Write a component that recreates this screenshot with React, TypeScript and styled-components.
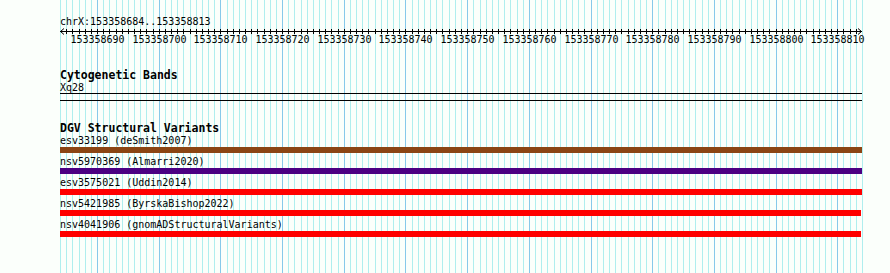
import styled, { createGlobalStyle } from 'styled-components';

const START = 153358684;
const END = 153358813;
const LEFT = 60;
const WIDTH = 802;
const PX = WIDTH / (END - START + 1);

const baseX = (base: number) => Math.round((base - START) * PX);

const variants = [
  { name: 'esv33199 (deSmith2007)', color: '#8b4513', width: 802 },
  { name: 'nsv5970369 (Almarri2020)', color: '#4b0082', width: 802 },
  { name: 'esv3575021 (Uddin2014)', color: '#ff0000', width: 802 },
  { name: 'nsv5421985 (ByrskaBishop2022)', color: '#ff0000', width: 801 },
  { name: 'nsv4041906 (gnomADStructuralVariants)', color: '#ff0000', width: 801 },
];

const GlobalStyle = createGlobalStyle`
  html, body {
    margin: 0;
    padding: 0;
    background: #fbfffb;
  }
`;

const App = () => {
  const bases: number[] = [];
  for (let b = START; b <= END + 1; b++) bases.push(b);
  const majors = bases.filter((b) => b % 10 === 0 && b <= END);

  return (
    <>
      <GlobalStyle />
      <Page>
        <Grid width={LEFT + WIDTH + 2} height={273}>
          {bases.map((b) => (
            <line
              key={b}
              x1={LEFT + baseX(b) + 0.5}
              x2={LEFT + baseX(b) + 0.5}
              y1={0}
              y2={273}
              stroke={b % 10 === 0 ? '#87c9ea' : '#afeeee'}
              strokeWidth={1}
              shapeRendering="crispEdges"
            />
          ))}
        </Grid>
        <Content>
          <Location>chrX:153358684..153358813</Location>
          <Ruler width={WIDTH + 2} height={20}>
            <line x1={0} x2={WIDTH} y1={3.5} y2={3.5} stroke="#000" shapeRendering="crispEdges" />
            <polyline points="4,0.5 0.5,3.5 4,6.5" fill="none" stroke="#000" />
            <polyline points={`${WIDTH - 4},0.5 ${WIDTH - 0.5},3.5 ${WIDTH - 4},6.5`} fill="none" stroke="#000" />
            {bases.slice(1, -1).map((b) => (
              <line
                key={b}
                x1={baseX(b) + 0.5}
                x2={baseX(b) + 0.5}
                y1={1}
                y2={6}
                stroke="#000"
                shapeRendering="crispEdges"
              />
            ))}
            {majors.map((b) => (
              <ScaleLabel key={b} x={baseX(b) + 0.5} y={15} textAnchor="middle">
                {b}
              </ScaleLabel>
            ))}
          </Ruler>

          <TrackTitle $gap={20}>Cytogenetic Bands</TrackTitle>
          <BandName>Xq28</BandName>
          <Band />

          <TrackTitle $gap={20}>DGV Structural Variants</TrackTitle>
          {variants.map((v) => (
            <VariantRow key={v.name}>
              <VariantLabel>{v.name}</VariantLabel>
              <VariantBar $color={v.color} style={{ width: v.width }} />
            </VariantRow>
          ))}
        </Content>
      </Page>
    </>
  );
};

export default App;

const Page = styled.div`
  position: relative;
  width: 890px;
  height: 273px;
  overflow: hidden;
  font-family: 'DejaVu Sans Mono', 'Liberation Mono', monospace;
  color: #000;
`;

const Grid = styled.svg`
  position: absolute;
  left: 0;
  top: 0;
  z-index: 0;
`;

const Content = styled.div`
  position: relative;
  z-index: 1;
  display: flex;
  flex-direction: column;
  padding: 16px 0 0 ${LEFT}px;
  width: ${WIDTH}px;
`;

const Location = styled.div`
  font-size: 10px;
  line-height: 12px;
  height: 12px;
`;

const Ruler = styled.svg`
  display: block;
  overflow: visible;
`;

const ScaleLabel = styled.text`
  font-family: 'DejaVu Sans Mono', 'Liberation Mono', monospace;
  font-size: 10px;
  fill: #000;
`;

const TrackTitle = styled.div<{ $gap: number }>`
  margin-top: ${(p) => p.$gap}px;
  font-size: 11.5px;
  font-weight: bold;
  line-height: 14px;
  height: 14px;
`;

const BandName = styled.div`
  font-size: 10px;
  line-height: 11px;
  height: 11px;
`;

const Band = styled.div`
  height: 6px;
  border-top: 1px solid #000;
  border-bottom: 1px solid #000;
`;

const VariantRow = styled.div`
  display: flex;
  flex-direction: column;
  padding-bottom: 3px;
`;

const VariantLabel = styled.div`
  font-size: 10px;
  line-height: 12px;
  height: 12px;
  white-space: nowrap;
`;

const VariantBar = styled.div<{ $color: string }>`
  height: 6px;
  background: ${(p) => p.$color};
`;
